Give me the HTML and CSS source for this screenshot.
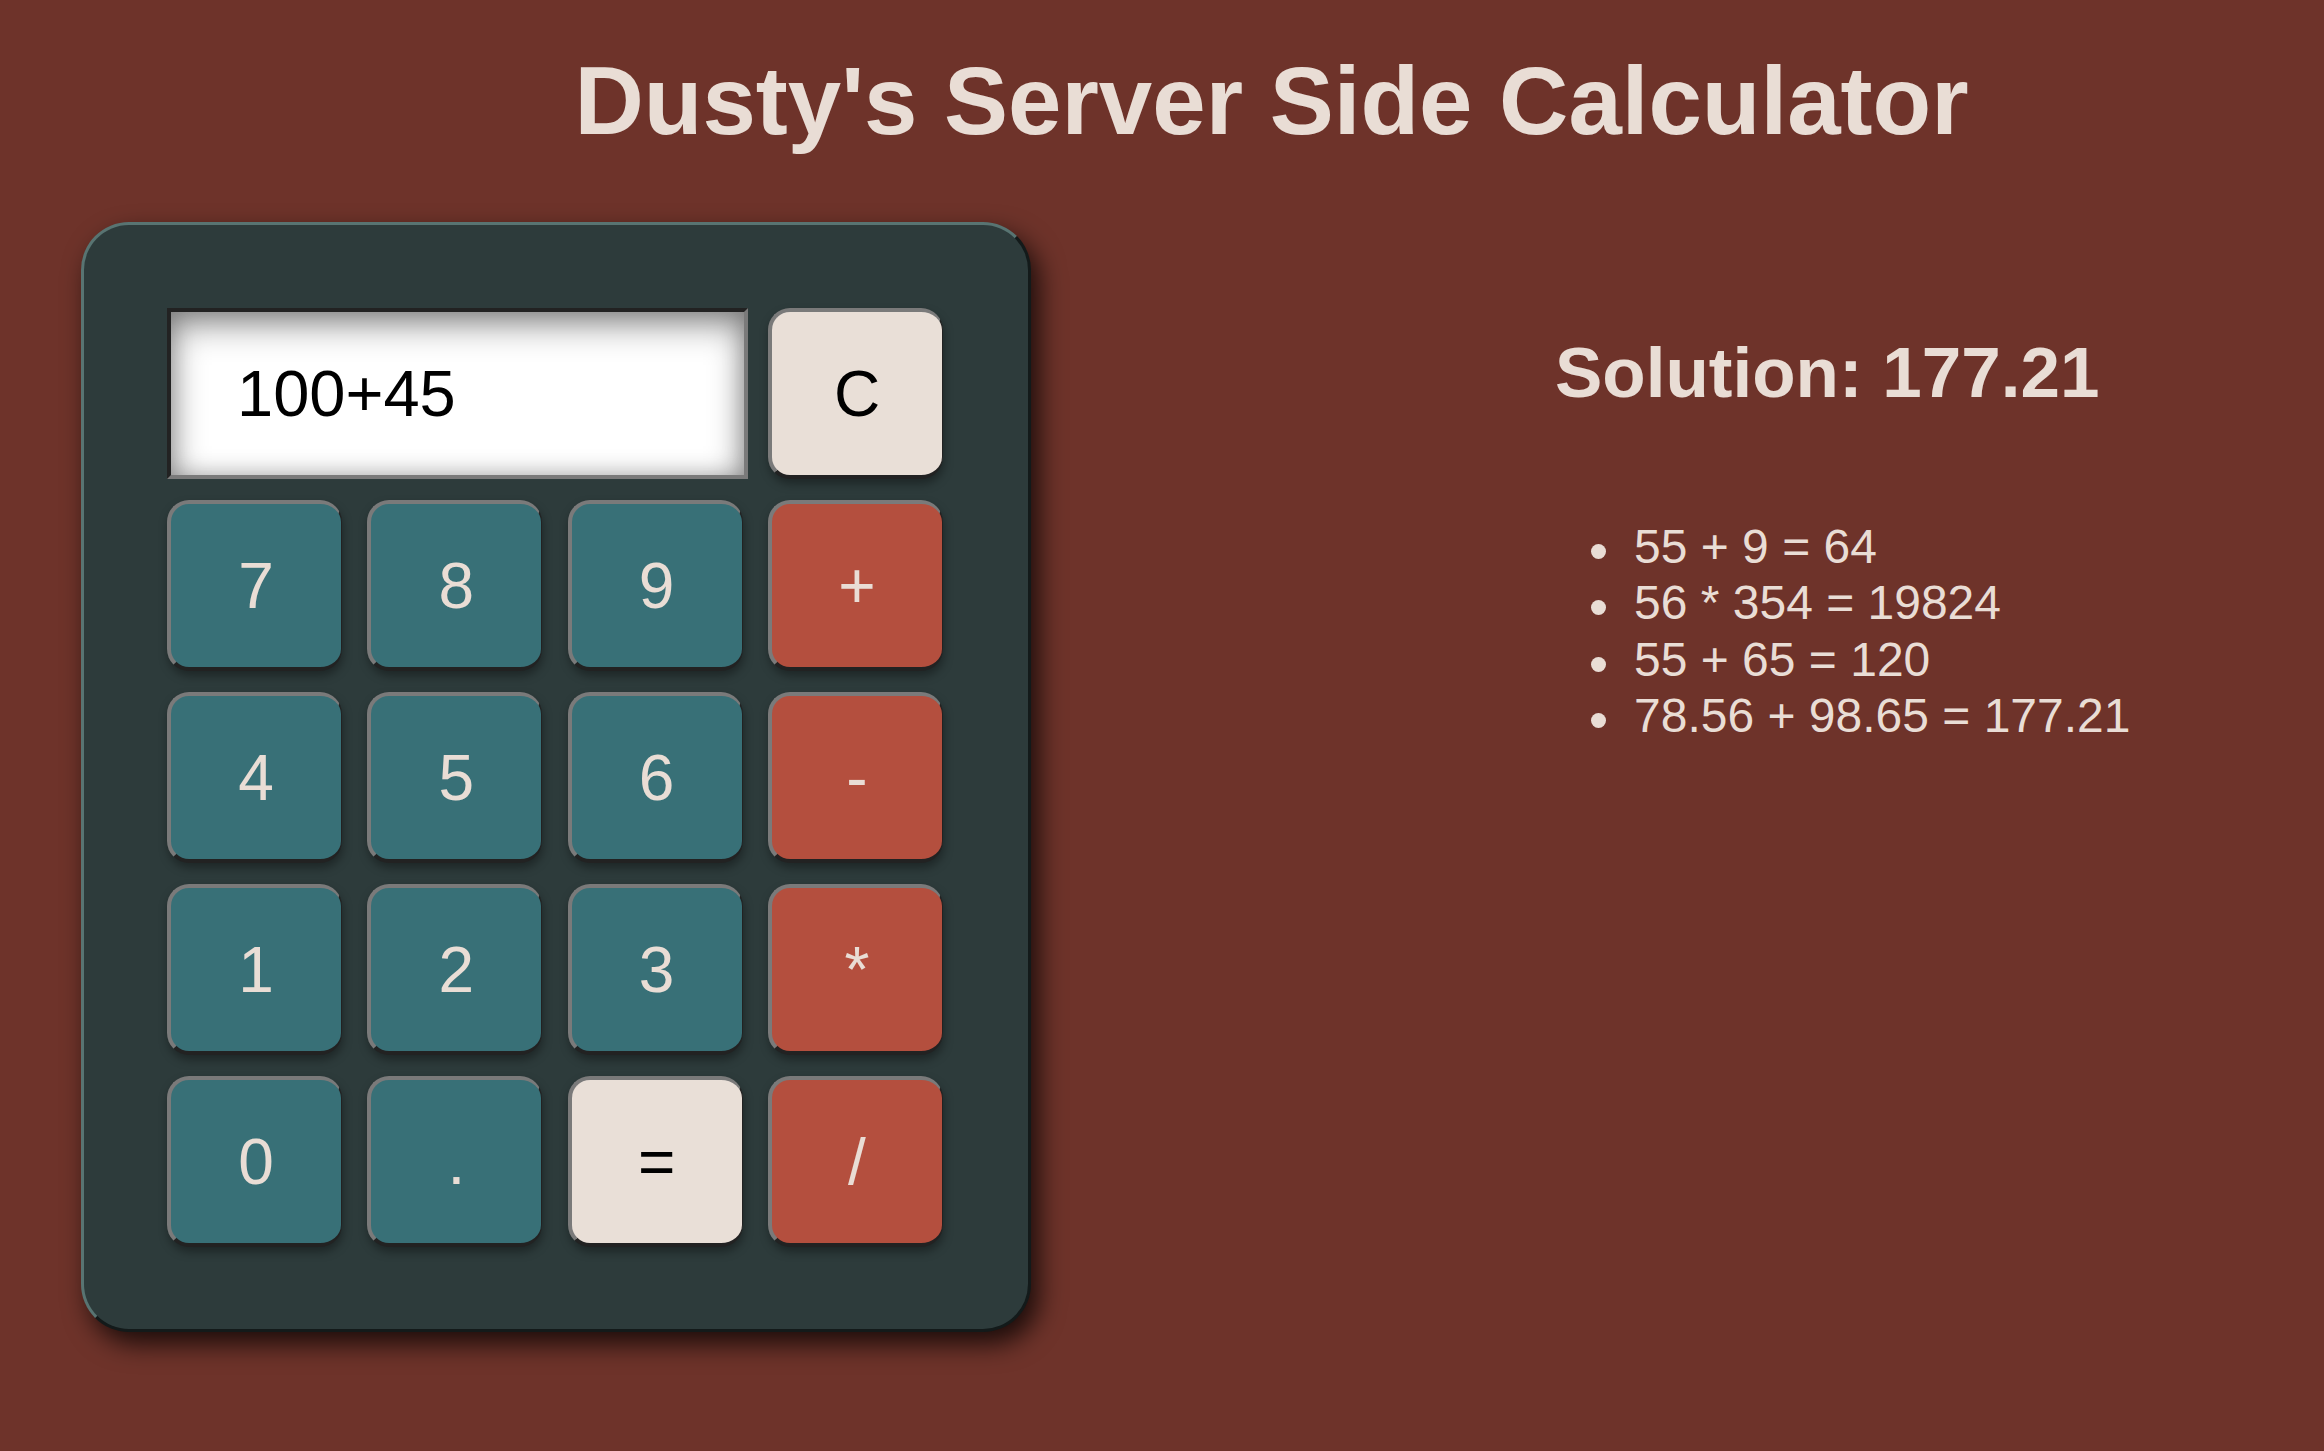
FILE: index.html
```html
<!DOCTYPE html>
<html lang="en">
<head>
<meta charset="utf-8">
<title>Dusty's Server Side Calculator</title>
<link rel="stylesheet" href="styles.css">
</head>
<body>
<h1 class="title">Dusty's Server Side Calculator</h1>
<main class="layout">
  <section class="calculator">
    <div class="display">100+45</div>
    <button class="key key-light">C</button>
    <button class="key key-num">7</button>
    <button class="key key-num">8</button>
    <button class="key key-num">9</button>
    <button class="key key-op">+</button>
    <button class="key key-num">4</button>
    <button class="key key-num">5</button>
    <button class="key key-num">6</button>
    <button class="key key-op">-</button>
    <button class="key key-num">1</button>
    <button class="key key-num">2</button>
    <button class="key key-num">3</button>
    <button class="key key-op">*</button>
    <button class="key key-num">0</button>
    <button class="key key-num">.</button>
    <button class="key key-light">=</button>
    <button class="key key-op">/</button>
  </section>
  <section class="results">
    <h2 class="solution">Solution: 177.21</h2>
    <ul class="history">
      <li>55 + 9 = 64</li>
      <li>56 * 354 = 19824</li>
      <li>55 + 65 = 120</li>
      <li>78.56 + 98.65 = 177.21</li>
    </ul>
  </section>
</main>
</body>
</html>
```

FILE: styles.css
```css
html, body {
  margin: 0;
  padding: 0;
}

body {
  background: #6e332a;
  color: #e9ddd5;
  font-family: "Liberation Sans", Arial, Helvetica, sans-serif;
  min-height: 1451px;
}

.title {
  margin: 0;
  padding: 46px 0 0 219px;
  text-align: center;
  font-size: 96px;
  line-height: 110px;
  font-weight: bold;
  color: #e9ddd5;
}

.layout {
  display: flex;
  align-items: flex-start;
  padding-left: 81px;
  margin-top: 66px;
}

.calculator {
  width: 776px;
  flex: none;
  display: grid;
  grid-template-columns: repeat(4, 175px);
  grid-auto-rows: 171px;
  column-gap: 25.33px;
  row-gap: 21px;
  padding: 83px 85px 82px 83px;
  background: #2d3b3b;
  border: 3px solid;
  border-color: #587472 #131a1a #131a1a #587472;
  border-radius: 48px;
  box-shadow: 8px 12px 26px rgba(0, 0, 0, 0.75);
}

.display {
  grid-column: 1 / 4;
  width: calc(100% + 5px);
  box-sizing: border-box;
  border: 4px solid;
  border-color: #222222 #7a7a7a #7a7a7a #222222;
  background: #ffffff;
  box-shadow: inset 0 12px 34px rgba(0, 0, 0, 0.45), inset 0 0 22px rgba(0, 0, 0, 0.2);
  display: flex;
  align-items: center;
  padding-left: 66px;
  font-size: 65px;
  color: #000000;
}

.key {
  box-sizing: border-box;
  width: 100%;
  height: 100%;
  margin: 0;
  padding: 0;
  border-style: solid;
  border-width: 4px 1px 4px 4px;
  border-color: #7a7a7a #222222 #222222 #7a7a7a;
  border-radius: 22px;
  font-family: "Liberation Sans", Arial, Helvetica, sans-serif;
  font-size: 64px;
  color: #e9ddd5;
  box-shadow: 1px 5px 10px rgba(0, 0, 0, 0.35);
  cursor: pointer;
}

.key-num {
  background: #387077;
}

.key-op {
  background: #b44f3e;
}

.key-light {
  background: #e9dfd7;
  color: #000000;
}

.results {
  margin-left: 524px;
  padding-top: 109px;
}

.solution {
  margin: 0;
  font-size: 71px;
  line-height: 83px;
  font-weight: bold;
  white-space: nowrap;
}

.history {
  margin: 105px 0 0;
  padding-left: 79px;
  list-style: none;
  font-size: 48px;
  line-height: 56.3px;
  white-space: nowrap;
}

.history li::before {
  content: "";
  display: inline-block;
  width: 15px;
  height: 15px;
  margin-left: -43px;
  margin-right: 28px;
  border-radius: 50%;
  background: #e9ddd5;
  vertical-align: 4px;
}
```
